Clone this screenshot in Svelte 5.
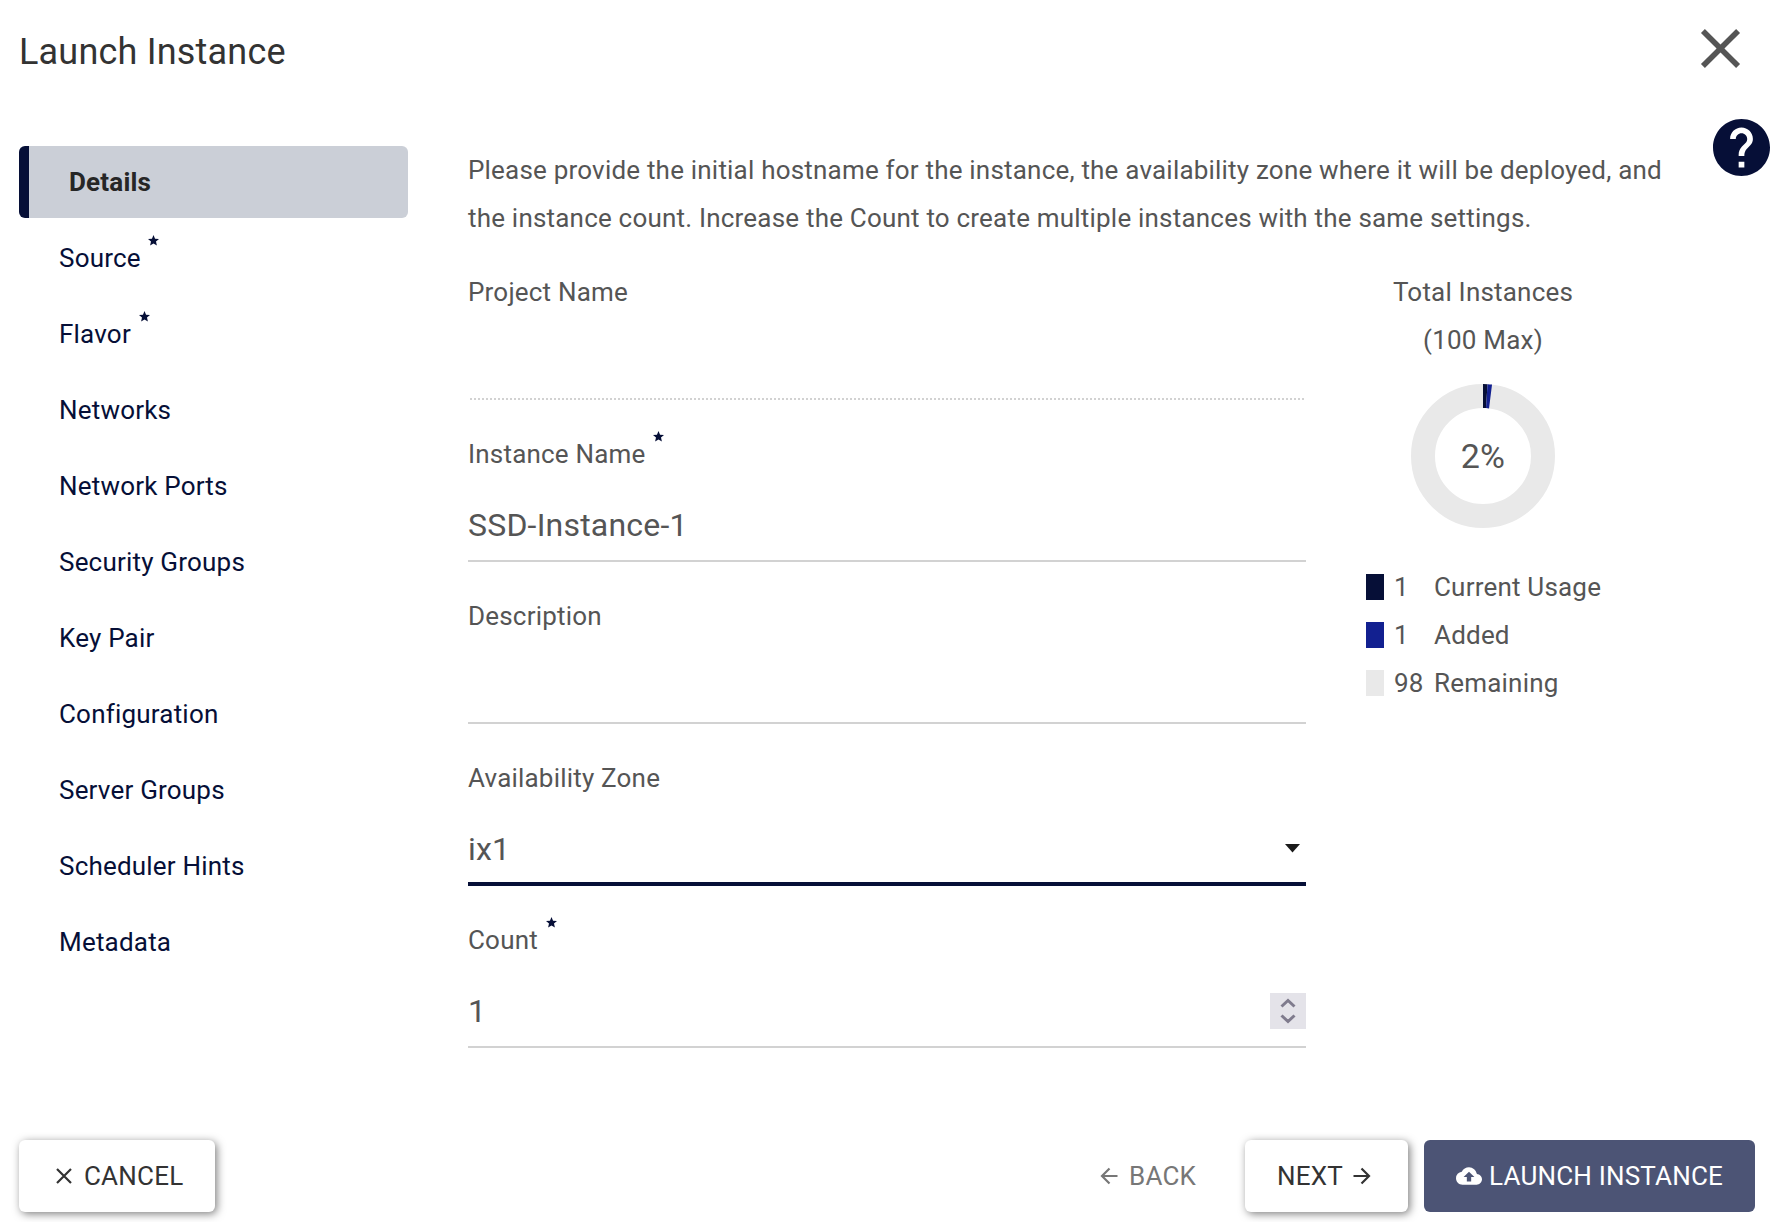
<script>
  const steps = [
    { label: 'Details', active: true },
    { label: 'Source', required: true },
    { label: 'Flavor', required: true },
    { label: 'Networks' },
    { label: 'Network Ports' },
    { label: 'Security Groups' },
    { label: 'Key Pair' },
    { label: 'Configuration' },
    { label: 'Server Groups' },
    { label: 'Scheduler Hints' },
    { label: 'Metadata' },
  ];
  const fields = [
    { label: 'Project Name', value: '', kind: 'disabled' },
    { label: 'Instance Name', value: 'SSD-Instance-1', required: true, kind: 'text' },
    { label: 'Description', value: '', kind: 'text' },
    { label: 'Availability Zone', value: 'ix1', kind: 'select' },
    { label: 'Count', value: '1', required: true, kind: 'number' },
  ];
  const legend = [
    { n: 1, label: 'Current Usage', tone: 'used' },
    { n: 1, label: 'Added', tone: 'added' },
    { n: 98, label: 'Remaining', tone: 'left' },
  ];
</script>

{#snippet star()}
  <svg class="star" viewBox="2 2 20 19"><path d="M12 17.27 18.18 21l-1.64-7.03L22 9.24l-7.19-.61L12 2 9.19 8.63 2 9.24l5.46 4.73L5.82 21z" /></svg>
{/snippet}

<div class="dialog">
  <header>
    <h1>Launch Instance</h1>
    <svg class="close" viewBox="0 0 24 24"><path d="M19 6.41 17.59 5 12 10.59 6.41 5 5 6.41 10.59 12 5 17.59 6.41 19 12 13.41 17.59 19 19 17.59 13.41 12z" /></svg>
  </header>

  <div class="body">
    <nav>
      {#each steps as step}
        <div class="step" class:active={step.active}>
          <span>{step.label}</span>
          {#if step.required}{@render star()}{/if}
        </div>
      {/each}
    </nav>

    <main>
      <p>Please provide the initial hostname for the instance, the availability zone where it will be deployed, and<br />the instance count. Increase the Count to create multiple instances with the same settings.</p>
      <div class="columns">
        <form>
          {#each fields as field}
            <div class="field">
              <div class="label"><span>{field.label}</span>{#if field.required}{@render star()}{/if}</div>
              <div class="input {field.kind}">
                <span>{field.value}</span>
                {#if field.kind === 'select'}
                  <svg class="caret" viewBox="0 0 15 9"><path d="M0 0h15L7.5 8.5z" /></svg>
                {:else if field.kind === 'number'}
                  <svg class="spinner" viewBox="0 0 36 36"><path d="M11.5 13.5 18 7.5l6.5 6M11.5 22.500l6.500 6 6.500-6" /></svg>
                {/if}
              </div>
            </div>
          {/each}
        </form>

        <aside>
          <div class="total">Total Instances<br />(100 Max)</div>
          <svg class="donut" viewBox="-72 -72 144 144">
            <circle r="60" class="left" />
            <path class="used" d="M0-72A72 72 0 0 1 4.52-71.86L3.01-47.9A48 48 0 0 0 0-48z" />
            <path class="added" d="M4.52-71.86A72 72 0 0 1 9.02-71.43L6.02-47.62A48 48 0 0 0 3.01-47.9z" />
            <text y="12" text-anchor="middle">2%</text>
          </svg>
          <ul>
            {#each legend as item}
              <li><i class={item.tone}></i><b>{item.n}</b><span>{item.label}</span></li>
            {/each}
          </ul>
        </aside>
      </div>
    </main>

    <svg class="help" viewBox="2 2 20 20"><path d="M12 2C6.48 2 2 6.48 2 12s4.48 10 10 10 10-4.48 10-10S17.52 2 12 2zm1 17h-2v-2h2v2zm2.07-7.75-.9.92C13.45 12.9 13 13.5 13 15h-2v-.5c0-1.1.45-2.1 1.17-2.83l1.24-1.26c.37-.36.59-.86.59-1.41 0-1.1-.9-2-2-2s-2 .9-2 2H8c0-2.21 1.79-4 4-4s4 1.79 4 4c0 .88-.36 1.68-.93 2.25z" /></svg>
  </div>

  <footer>
    <div class="btn raised cancel">
      <svg class="ico-x" viewBox="0 0 16 16"><path d="M1 1l14 14M15 1 1 15" /></svg><span>CANCEL</span>
    </div>
    <div class="btn back">
      <svg class="arrow" viewBox="0 0 18 18"><path d="M17.5 9H2M9.5 1.5 2 9l7.5 7.5" /></svg><span>BACK</span>
    </div>
    <div class="btn raised next">
      <span>NEXT</span><svg class="arrow" viewBox="0 0 18 18"><path d="M.5 9H16M8.500 1.500 16 9l-7.500 7.500" /></svg>
    </div>
    <div class="btn launch">
      <svg class="cloud" viewBox="0 4 24 16"><path d="M19.350 10.040A7.490 7.490 0 0 0 12 4C9.110 4 6.600 5.640 5.350 8.040A5.994 5.994 0 0 0 0 14c0 3.310 2.690 6 6 6h13c2.760 0 5-2.240 5-5 0-2.640-2.050-4.780-4.650-4.960zM14 13v4h-4v-4H7l5-5 5 5h-3z" /></svg><span>LAUNCH INSTANCE</span>
    </div>
  </footer>
</div>

<style>
  :global(body) { margin: 0; background: #fff; }
  .dialog {
    box-sizing: border-box;
    width: 1775px;
    height: 1222px;
    overflow: hidden;
    display: flex;
    flex-direction: column;
    font: 26px/48px Roboto, sans-serif;
    letter-spacing: 0.2px;
    color: #555;
  }
  header {
    height: 146px;
    flex: none;
    box-sizing: border-box;
    padding: 15px 21px 0 19px;
    display: flex;
    justify-content: space-between;
  }
  h1 { margin: 4px 0 0; font-weight: 400; font-size: 36px; line-height: 66px; color: #333; }
  .close { width: 67px; height: 67px; fill: #555; }
  .body { display: flex; flex: 1; align-items: flex-start; }
  nav { width: 389px; margin-left: 19px; display: flex; flex-direction: column; gap: 4px; }
  .step { display: flex; align-items: center; height: 72px; padding-left: 40px; color: #060f37; }
  .active { border-left: 10px solid #060f37; border-radius: 6px; background: #cbcfd7; color: #262626; font-weight: 700; }
  .star { width: 11px; height: 10.5px; margin: 0 0 35px 7.7px; fill: #060f37; flex: none; }
  main { width: 1213px; margin-left: 60px; }
  p { margin: 0 0 26px; white-space: nowrap; }
  .columns { display: flex; }
  form { width: 838px; display: flex; flex-direction: column; gap: 30px; }
  .label { display: flex; align-items: center; height: 48px; }
  .input {
    box-sizing: border-box;
    height: 84px;
    padding-top: 12px;
    border-bottom: 2px solid #d2d2d2;
    display: flex;
    justify-content: space-between;
    font-size: 32px;
    line-height: 70px;
  }
  .disabled { margin: 0 2px; border-bottom-style: dotted; }
  .select { border-bottom: 4px solid #060f37; }
  .caret { width: 15px; height: 9px; margin: 30px 6px 0 0; fill: #1a1a1a; }
  .spinner { width: 36px; height: 36px; margin-top: 17px; background: #e4e3e9; }
  .spinner path { fill: none; stroke: #7f7b8d; stroke-width: 3; }
  aside { width: 234px; margin-left: 60px; }
  .total { text-align: center; }
  .donut { display: block; width: 144px; height: 144px; margin: 20px 0 0 45px; }
  .donut circle { fill: none; stroke: #e9e9e9; stroke-width: 24; }
  .donut .used { fill: #060f37; }
  .donut .added { fill: #122090; }
  .donut text { font-size: 34px; fill: #555; }
  ul { margin: 35px 0 0; padding: 0; list-style: none; white-space: nowrap; }
  li { display: flex; align-items: center; height: 48px; }
  i { width: 18px; height: 26px; margin-right: 10px; flex: none; }
  i.used { background: #060f37; }
  i.added { background: #122090; }
  i.left { background: #e9e9e9; }
  b { width: 40px; font-weight: 400; flex: none; }
  .help { width: 57px; height: 57px; margin: -27px 0 0 32px; fill: #060f37; flex: none; }
  footer { display: flex; height: 72px; padding: 0 20px 10px 19px; color: #333; line-height: 72px; }
  .btn { display: flex; align-items: center; box-sizing: border-box; height: 72px; border-radius: 6px; white-space: nowrap; }
  .raised { box-shadow: 2px 2px 8px rgba(0, 0, 0, 0.5); }
  .cancel { width: 196px; padding-left: 37px; gap: 12px; }
  .back { margin-left: auto; width: 145px; gap: 11px; color: #777; }
  .next { width: 163px; padding-left: 32px; gap: 10px; margin-right: 16px; }
  .launch { width: 331px; padding-left: 32px; gap: 7px; background: #4c5475; color: #fff; }
  .ico-x { width: 16px; height: 16px; }
  .arrow { width: 18px; height: 18px; }
  .ico-x path, .arrow path { fill: none; stroke: currentColor; stroke-width: 2.200; }
  .cloud { width: 26px; height: 18px; fill: #fff; }
</style>
